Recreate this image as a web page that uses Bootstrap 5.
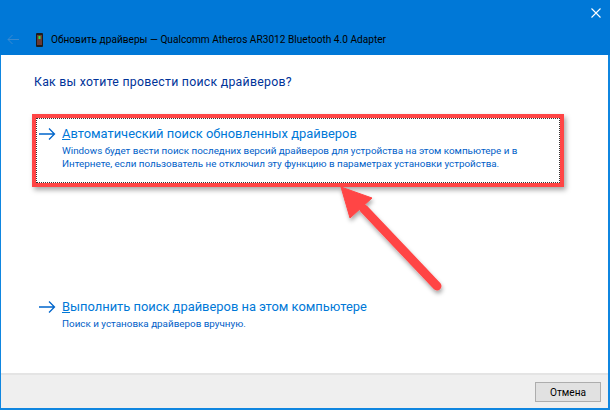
<!DOCTYPE html>
<html lang="ru">
<head>
  <meta charset="UTF-8" />
  <meta name="viewport" content="width=device-width, initial-scale=1.0"/>
  <title>Обновить драйверы</title>
  <link rel="stylesheet" href="https://cdn.jsdelivr.net/npm/bootstrap@5.3.0/dist/css/bootstrap.min.css"/>
  <style>
    html, body { width: 610px; height: 410px; overflow: hidden; background: #fff; }
    body { font-family: Roboto, "Noto Sans", sans-serif; position: relative; }
    .win-frame { width: 610px; height: 410px; border: solid #0f86e0; border-width: 0 2px 2px 1px; }
    .win-title { height: 55px; background: #0078d7; margin: 0 -2px 0 -1px; padding: 24px 0 0 7px; color: #000; font-size: 10.15px; line-height: 15px; }
    .win-close { position: absolute; top: 8px; right: 9px; }
    .win-back { margin-right: 9px; }
    .win-main { padding: 17px 0 0 33px; }
    .win-heading { color: #003399; font-size: 12.3px; letter-spacing: .26px; line-height: 21px; margin: 0; font-weight: 400; }
    .task-row { gap: 6px; margin-left: 5px; }
    .task-first { margin-top: 31px; height: 173px; }
    .task-arrow { margin-top: 3px; flex: none; }
    .task-name { color: #0078d7; font-size: 12.9px; line-height: 20px; }
    .task-desc { color: #0060c8; font-size: 9.85px; line-height: 13px; }
    .task-desc-first { width: 470px; }
    .win-footer { height: 35px; background: #efefef; border-top: 2px solid #e4e4e4; padding: 7px 7px 0 0; }
    .win-btn { width: 66px; height: 20px; background: #e1e1e1; border: 1px solid #adadad; border-radius: 0; padding: 0; color: #000; font-size: 10.15px; line-height: 17px; }
    .focus-box { position: absolute; left: 32px; top: 114px; width: 532px; height: 73px; border: 4px solid #ff4545; box-shadow: 2px 3px 5px rgba(0,0,0,.35); pointer-events: none; }
    .focus-dots { height: 100%; border: 1px dotted #333; }
    .big-arrow { position: absolute; left: 0; top: 0; pointer-events: none; }
  </style>
</head>
<body>
  <div class="win-frame d-flex flex-column">
    <!-- Заголовок окна -->
    <div class="win-title d-flex align-items-center gap-2">
      <svg class="win-back" width="12" height="11" viewBox="0 0 12 11">
        <path d="M1 5.500H12M1 5.500l4.500-4.500M1 5.500l4.500 4.500" fill="none" stroke="#3a8ad0" stroke-width="1"/>
      </svg>
      <svg width="7" height="14" viewBox="0 0 7 14">
        <rect width="7" height="14" rx="1" fill="#1c1c1c"/>
        <rect x="1" y="2" width="5" height="10" fill="#6b3a34"/>
        <rect x="2.500" y="3" width="2" height="3" fill="#2fe04a"/>
      </svg>
      <span>Обновить драйверы — Qualcomm Atheros AR3012 Bluetooth 4.0 Adapter</span>
    </div>
    <svg class="win-close" width="10" height="10" viewBox="0 0 10 10">
      <path d="M.5.5l9 9M9.500.5l-9 9" stroke="#fff" stroke-width="1.100"/>
    </svg>

    <div class="win-main flex-grow-1">
      <h1 class="win-heading">Как вы хотите провести поиск драйверов?</h1>

      <div class="task-row task-first d-flex">
        <svg class="task-arrow" width="17" height="14" viewBox="0 0 17 14">
          <path d="M0 7H15.500M10 1.500L15.500 7L10 12.500" fill="none" stroke="#0066cc" stroke-width="1.300"/>
        </svg>
        <div>
          <div class="task-name"><u>А</u>втоматический поиск обновленных драйверов</div>
          <div class="task-desc task-desc-first">Windows будет вести поиск последних версий драйверов для устройства на этом компьютере и в Интернете, если пользователь не отключил эту функцию в параметрах установки устройства.</div>
        </div>
      </div>

      <div class="task-row d-flex">
        <svg class="task-arrow" width="17" height="14" viewBox="0 0 17 14">
          <path d="M0 7H15.500M10 1.500L15.500 7L10 12.500" fill="none" stroke="#0066cc" stroke-width="1.300"/>
        </svg>
        <div>
          <div class="task-name"><u>В</u>ыполнить поиск драйверов на этом компьютере</div>
          <div class="task-desc">Поиск и установка драйверов вручную.</div>
        </div>
      </div>
    </div>

    <div class="win-footer d-flex justify-content-end align-items-start">
      <button type="button" class="btn win-btn">Отмена</button>
    </div>
  </div>

  <!-- Красная рамка и стрелка поверх окна -->
  <div class="focus-box"><div class="focus-dots"></div></div>
  <svg class="big-arrow" width="610" height="410" viewBox="0 0 610 410">
    <defs>
      <filter id="arrowShadow" x="-30%" y="-30%" width="160%" height="160%">
        <feDropShadow dx="1" dy="3" stdDeviation="2" flood-color="#000" flood-opacity=".35"/>
      </filter>
    </defs>
    <g filter="url(#arrowShadow)">
      <path d="M364 209L437 286" stroke="#ff4545" stroke-width="9" stroke-linecap="round"/>
      <path d="M341 187L372 198L350 218Z" fill="#ff4545" stroke="#ff4545" stroke-linejoin="round"/>
    </g>
  </svg>
</body>
</html>
